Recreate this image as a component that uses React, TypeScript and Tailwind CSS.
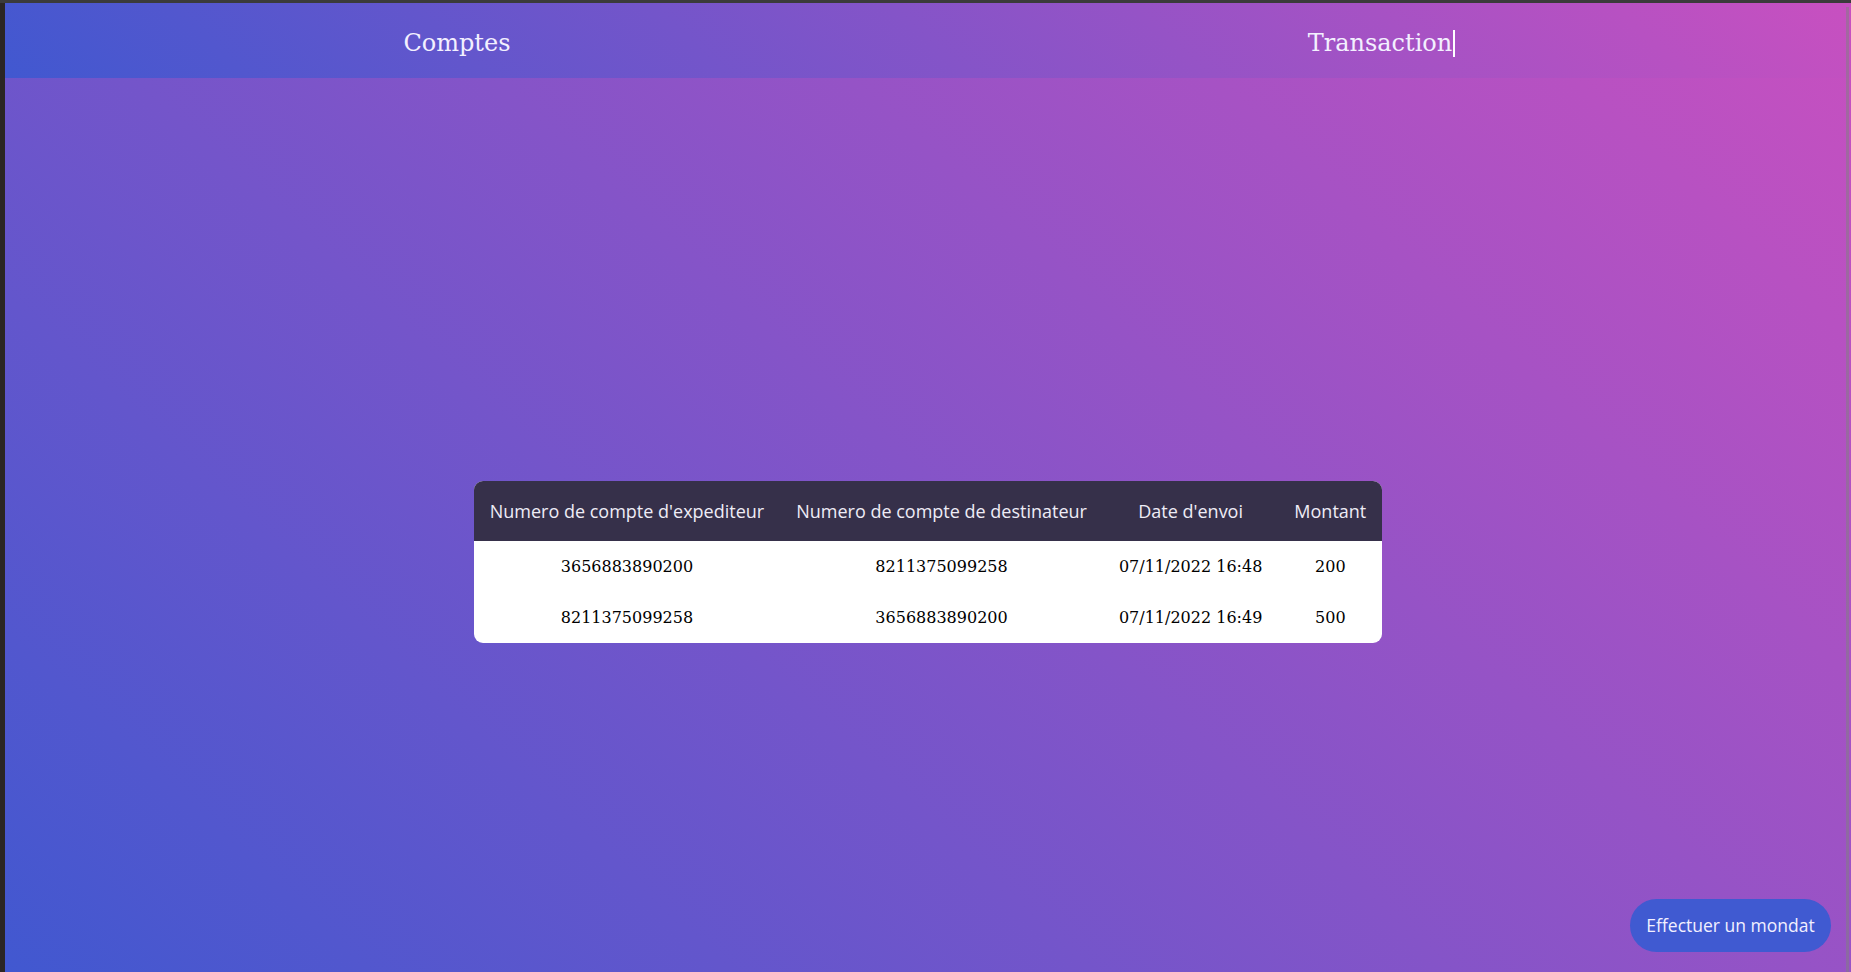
import React from 'react';

const transactions = [
  { from: '3656883890200', to: '8211375099258', date: '07/11/2022 16:48', amount: '200' },
  { from: '8211375099258', to: '3656883890200', date: '07/11/2022 16:49', amount: '500' },
];

const headers = [
  "Numero de compte d'expediteur",
  'Numero de compte de destinateur',
  "Date d'envoi",
  'Montant',
];

export default function App() {
  return (
    <div className="relative h-[972px] w-full overflow-hidden bg-[#2b2624] pl-[5px] pt-[3px]">
      {/* top window edge */}
      <div className="absolute left-0 right-0 top-0 h-[3px] bg-[#3b3b3b]" />

      <div className="relative flex h-[969px] flex-col bg-[linear-gradient(43deg,#4158D0_0%,#C850C0_100%)]">
        {/* Nav */}
        <nav className="flex h-[75px] items-center bg-[linear-gradient(43deg,#4158D0_0%,#C850C0_100%)] pt-[5px] font-['DejaVu_Serif',serif] text-[24px] text-[#f3f0ff]">
          <div className="-ml-[8px] grid w-[1844px] grid-cols-2">
            <a href="#" className="pr-[2px] text-center leading-[28px]">Comptes</a>
            <a href="#" className="text-center leading-[28px]">
              <span className="relative">
                Transaction
                <span className="absolute -right-[3px] top-[1px] h-[27px] w-[2px] bg-white" />
              </span>
            </a>
          </div>
        </nav>

        {/* Transactions table */}
        <div className="mt-[403px] flex justify-center">
          <div className="overflow-hidden rounded-[9px] bg-white">
            <table className="border-collapse">
              <thead>
                <tr className="bg-[#36304a]">
                  {headers.map((h) => (
                    <th
                      key={h}
                      className="whitespace-nowrap px-4 py-[17.5px] text-center font-['Open_Sans',sans-serif] text-[18px] font-normal leading-[25px] text-[#eeecf6]"
                    >
                      {h}
                    </th>
                  ))}
                </tr>
              </thead>
              <tbody className="font-['DejaVu_Serif',serif] text-[16px] text-black">
                {transactions.map((t) => (
                  <tr key={t.date}>
                    <td className="px-4 py-4 text-center leading-[19px]">{t.from}</td>
                    <td className="px-4 py-4 text-center leading-[19px]">{t.to}</td>
                    <td className="whitespace-nowrap px-4 py-4 text-center leading-[19px]">{t.date}</td>
                    <td className="px-4 py-4 text-center leading-[19px]">{t.amount}</td>
                  </tr>
                ))}
              </tbody>
            </table>
          </div>
        </div>

        {/* overlay scrollbar */}
        <div className="absolute right-[2px] top-[4px] bottom-0 w-[3px] bg-[#7f7f7f]/50" />
      </div>

      <button className="absolute bottom-5 right-5 flex h-[53px] w-[201px] items-center justify-center rounded-full bg-[#405ad1] font-['Open_Sans',sans-serif] text-[17.5px] text-[#f2f0ff]">
        Effectuer un mondat
      </button>
    </div>
  );
}
